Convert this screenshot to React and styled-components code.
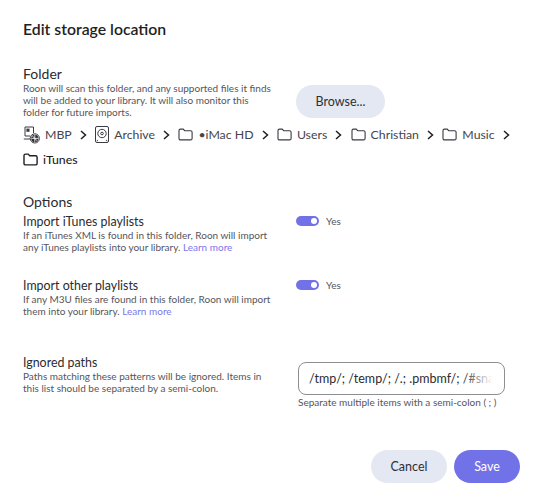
import React from 'react'
import styled, { createGlobalStyle } from 'styled-components'

const GlobalStyle = createGlobalStyle`
  html, body {
    margin: 0;
    padding: 0;
    background: #fff;
  }
  body {
    font-family: Lato, "Liberation Sans", sans-serif;
    color: #2b2b30;
  }
  * {
    box-sizing: border-box;
  }
`

const Dialog = styled.div`
  width: 534px;
  height: 500px;
  padding: 19px 14px 0 23px;
  display: flex;
  flex-direction: column;
`

const Title = styled.h1`
  margin: 0;
  font-size: 15.8px;
  line-height: 19px;
  font-weight: 600;
  color: #1f1f23;
`

const Row = styled.div`
  display: grid;
  grid-template-columns: 273px 1fr;
  margin-top: ${p => p.$top || 0}px;
  min-height: ${p => p.$height || 0}px;
`

const Heading = styled.h2`
  margin: ${p => p.$top || 0}px 0 0;
  font-size: 14px;
  line-height: ${p => p.$line || 16}px;
  font-weight: 400;
  color: #2b2b30;
`

const SubHeading = styled.h3`
  margin: 0;
  font-size: 12.4px;
  line-height: 15px;
  font-weight: 400;
  color: #2b2b30;
`

const Description = styled.p`
  margin: 0;
  font-size: 10px;
  line-height: 12px;
  color: #55555c;
`

const LearnMore = styled.a`
  color: #7c78e8;
`

const PillButton = styled.button`
  height: 33px;
  width: ${p => p.$width}px;
  border: 0;
  border-radius: 17px;
  font: 400 12.5px Lato, sans-serif;
  color: ${p => (p.$primary ? '#fff' : '#2f2f34')};
  background: ${p => (p.$primary ? '#7272e8' : '#e4e8f2')};
`

const BrowseWrap = styled.div`
  padding-top: 3px;
`

const Crumbs = styled.div`
  display: flex;
  flex-wrap: wrap;
  align-items: center;
  row-gap: 6px;
  margin-top: 7px;
`

const Crumb = styled.div`
  display: flex;
  align-items: center;
  height: 19px;
  gap: 5px;
  font-size: 12.3px;
  color: ${p => (p.$current ? '#1f1f23' : '#45454b')};
  font-weight: ${p => (p.$current ? 500 : 400)};
`

const Chevron = styled.svg`
  width: 7px;
  height: 10px;
  margin: 0 8.2px;
  fill: none;
  stroke: #1f1f23;
  stroke-width: 1.5;
`

const ToggleWrap = styled.div`
  display: flex;
  align-items: center;
  gap: 7px;
  height: 12px;
  padding-top: 1px;
`

const Track = styled.span`
  position: relative;
  display: block;
  width: 23px;
  height: 10px;
  border-radius: 5px;
  background: #7272e8;
`

const Knob = styled.span`
  position: absolute;
  right: 2px;
  top: 2px;
  width: 6px;
  height: 6px;
  border-radius: 50%;
  background: #fff;
`

const ToggleLabel = styled.span`
  font-size: 10px;
  color: #55555c;
`

const FieldColumn = styled.div`
  margin-left: 2px;
  padding-top: 7px;
`

const FieldBox = styled.div`
  position: relative;
  width: 207px;
  height: 33px;
  padding: 0 10px;
  border: 1px solid #8d8d92;
  border-radius: 8px;
  font-size: 12.5px;
  line-height: 31px;
  white-space: nowrap;
  color: #2b2b30;
  &::after {
    content: '';
    position: absolute;
    top: 0;
    bottom: 0;
    right: 8px;
    width: 34px;
    background: linear-gradient(to right, rgba(255, 255, 255, 0), #fff 90%);
  }
`

const Hint = styled.div`
  margin-top: 1px;
  font-size: 10px;
  line-height: 13px;
  color: #55555c;
`

const Footer = styled.div`
  display: flex;
  justify-content: flex-end;
  gap: 7px;
  margin-top: 41px;
`

const FolderIcon = ({ $strong }) => (
  <svg width="15" height="13" viewBox="0 0 15 13" fill="none" stroke={$strong ? '#1f1f23' : '#3a3a40'} strokeWidth={$strong ? 1.4 : 1.1}>
    <path d="M1 2.6C1 1.7 1.6 1.1 2.5 1.1H5.2L6.7 2.7H12.6C13.5 2.7 14.1 3.3 14.1 4.2V10.4C14.1 11.3 13.5 11.9 12.6 11.9H2.5C1.6 11.9 1 11.3 1 10.4Z" />
  </svg>
)

const DriveIcon = () => (
  <svg width="14" height="17" viewBox="0 0 14 17" fill="none" stroke="#3a3a40" strokeWidth="1">
    <rect x="0.5" y="0.5" width="13" height="16" rx="1.5" />
    <circle cx="7" cy="7.5" r="4.2" />
    <circle cx="7" cy="7.5" r="1.3" />
    <circle cx="2.4" cy="14.6" r="0.3" />
    <circle cx="11.6" cy="14.6" r="0.3" />
  </svg>
)

const ComputerIcon = () => (
  <svg width="17" height="18" viewBox="0 0 17 18" fill="none" stroke="#3a3a40" strokeWidth="1">
    <path d="M2 1H10.5V7M2 1V10H7" />
    <path d="M3.4 2.6H6.5V5.8H3.4Z" fill="#3a3a40" stroke="none" />
    <path d="M0.8 13H7.5" />
    <circle cx="11.8" cy="12.4" r="4.6" fill="#fff" />
    <circle cx="11.8" cy="12.4" r="3.6" fill="#2f2f34" stroke="none" />
    <path d="M8.4 12.4H15.2M11.8 9V15.8M9.5 10L14 14.8" stroke="#fff" strokeWidth="0.8" />
  </svg>
)

const Arrow = () => (
  <Chevron viewBox="0 0 7 10">
    <path d="M1 1L5.5 5L1 9" />
  </Chevron>
)

const crumbs = [
  { label: 'MBP', icon: <ComputerIcon /> },
  { label: 'Archive', icon: <DriveIcon /> },
  { label: '•iMac HD', icon: <FolderIcon /> },
  { label: 'Users', icon: <FolderIcon /> },
  { label: 'Christian', icon: <FolderIcon /> },
  { label: 'Music', icon: <FolderIcon /> },
  { label: 'iTunes', icon: <FolderIcon $strong />, current: true },
]

const Toggle = () => (
  <ToggleWrap>
    <Track>
      <Knob />
    </Track>
    <ToggleLabel>Yes</ToggleLabel>
  </ToggleWrap>
)

const App = () => (
  <Dialog>
    <GlobalStyle />
    <Title>Edit storage location</Title>

    <Heading $top={27} $line={17}>Folder</Heading>
    <Row>
      <Description>
        Roon will scan this folder, and any supported files it finds
        <br />
        will be added to your library. It will also monitor this
        <br />
        folder for future imports.
      </Description>
      <BrowseWrap>
        <PillButton $width={89}>Browse...</PillButton>
      </BrowseWrap>
    </Row>

    <Crumbs>
      {crumbs.map((crumb, i) => (
        <React.Fragment key={crumb.label}>
          <Crumb $current={crumb.current}>
            {crumb.icon}
            {crumb.label}
          </Crumb>
          {i < crumbs.length - 1 && <Arrow />}
        </React.Fragment>
      ))}
    </Crumbs>

    <Heading $top={25}>Options</Heading>

    <Row $top={4} $height={64}>
      <div>
        <SubHeading>Import iTunes playlists</SubHeading>
        <Description>
          If an iTunes XML is found in this folder, Roon will import
          <br />
          any iTunes playlists into your library. <LearnMore>Learn more</LearnMore>
        </Description>
      </div>
      <Toggle />
    </Row>

    <Row $height={64}>
      <div>
        <SubHeading>Import other playlists</SubHeading>
        <Description>
          If any M3U files are found in this folder, Roon will import
          <br />
          them into your library. <LearnMore>Learn more</LearnMore>
        </Description>
      </div>
      <Toggle />
    </Row>

    <Row $top={13}>
      <div>
        <SubHeading>Ignored paths</SubHeading>
        <Description>
          Paths matching these patterns will be ignored. Items in
          <br />
          this list should be separated by a semi-colon.
        </Description>
      </div>
      <FieldColumn>
        <FieldBox>/tmp/; /temp/; /.; .pmbmf/; /#sna</FieldBox>
        <Hint>Separate multiple items with a semi-colon ( ; )</Hint>
      </FieldColumn>
    </Row>

    <Footer>
      <PillButton $width={76}>Cancel</PillButton>
      <PillButton $width={66} $primary>Save</PillButton>
    </Footer>
  </Dialog>
)

export default App
